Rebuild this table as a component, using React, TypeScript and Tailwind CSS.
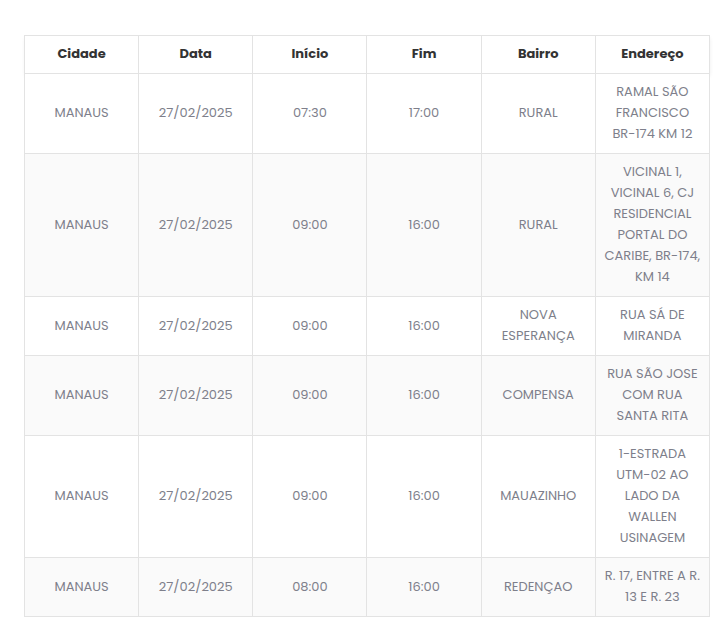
const headers = ["Cidade", "Data", "Início", "Fim", "Bairro", "Endereço"];

const rows: { cidade: string; data: string; inicio: string; fim: string; bairro: string[]; endereco: string[] }[] = [
  { cidade: "MANAUS", data: "27/02/2025", inicio: "07:30", fim: "17:00", bairro: ["RURAL"], endereco: ["RAMAL SÃO", "FRANCISCO", "BR-174 KM 12"] },
  { cidade: "MANAUS", data: "27/02/2025", inicio: "09:00", fim: "16:00", bairro: ["RURAL"], endereco: ["VICINAL 1,", "VICINAL 6, CJ", "RESIDENCIAL", "PORTAL DO", "CARIBE, BR-174,", "KM 14"] },
  { cidade: "MANAUS", data: "27/02/2025", inicio: "09:00", fim: "16:00", bairro: ["NOVA", "ESPERANÇA"], endereco: ["RUA SÁ DE", "MIRANDA"] },
  { cidade: "MANAUS", data: "27/02/2025", inicio: "09:00", fim: "16:00", bairro: ["COMPENSA"], endereco: ["RUA SÃO JOSE", "COM RUA", "SANTA RITA"] },
  { cidade: "MANAUS", data: "27/02/2025", inicio: "09:00", fim: "16:00", bairro: ["MAUAZINHO"], endereco: ["1-ESTRADA", "UTM-02 AO", "LADO DA", "WALLEN", "USINAGEM"] },
  { cidade: "MANAUS", data: "27/02/2025", inicio: "08:00", fim: "16:00", bairro: ["REDENÇAO"], endereco: ["R. 17, ENTRE A R.", "13 E R. 23"] },
];

function Lines({ items }: { items: string[] }) {
  return (
    <>
      {items.map((l, i) => (
        <span key={i} className="block whitespace-nowrap">
          {l}
        </span>
      ))}
    </>
  );
}

const cell = "border border-[#e3e3e3] px-2 pt-[7px] pb-[9px] text-center align-middle";

export default function App() {
  return (
    <div className="min-h-screen bg-white pt-[35px] pl-[24px] font-['Poppins','Open_Sans',sans-serif]">
      <table className="w-[686px] table-fixed border-collapse text-[13px] leading-[21px]">
        <thead className="shadow-[0_2px_4px_rgba(0,0,0,0.07)]">
          <tr>
            {headers.map((h) => (
              <th key={h} className={`${cell} font-bold text-[#333333]`}>
                {h}
              </th>
            ))}
          </tr>
        </thead>
        <tbody>
          {rows.map((r, i) => (
            <tr key={i} className={i % 2 === 1 ? "bg-[#fafafa]" : "bg-white"}>
              <td className={`${cell} text-[#7e7f8b]`}>{r.cidade}</td>
              <td className={`${cell} text-[#7e7f8b]`}>{r.data}</td>
              <td className={`${cell} text-[#7e7f8b]`}>{r.inicio}</td>
              <td className={`${cell} text-[#7e7f8b]`}>{r.fim}</td>
              <td className={`${cell} text-[#7e7f8b]`}>
                <Lines items={r.bairro} />
              </td>
              <td className={`${cell} text-[#7e7f8b]`}>
                <Lines items={r.endereco} />
              </td>
            </tr>
          ))}
        </tbody>
      </table>
    </div>
  );
}
